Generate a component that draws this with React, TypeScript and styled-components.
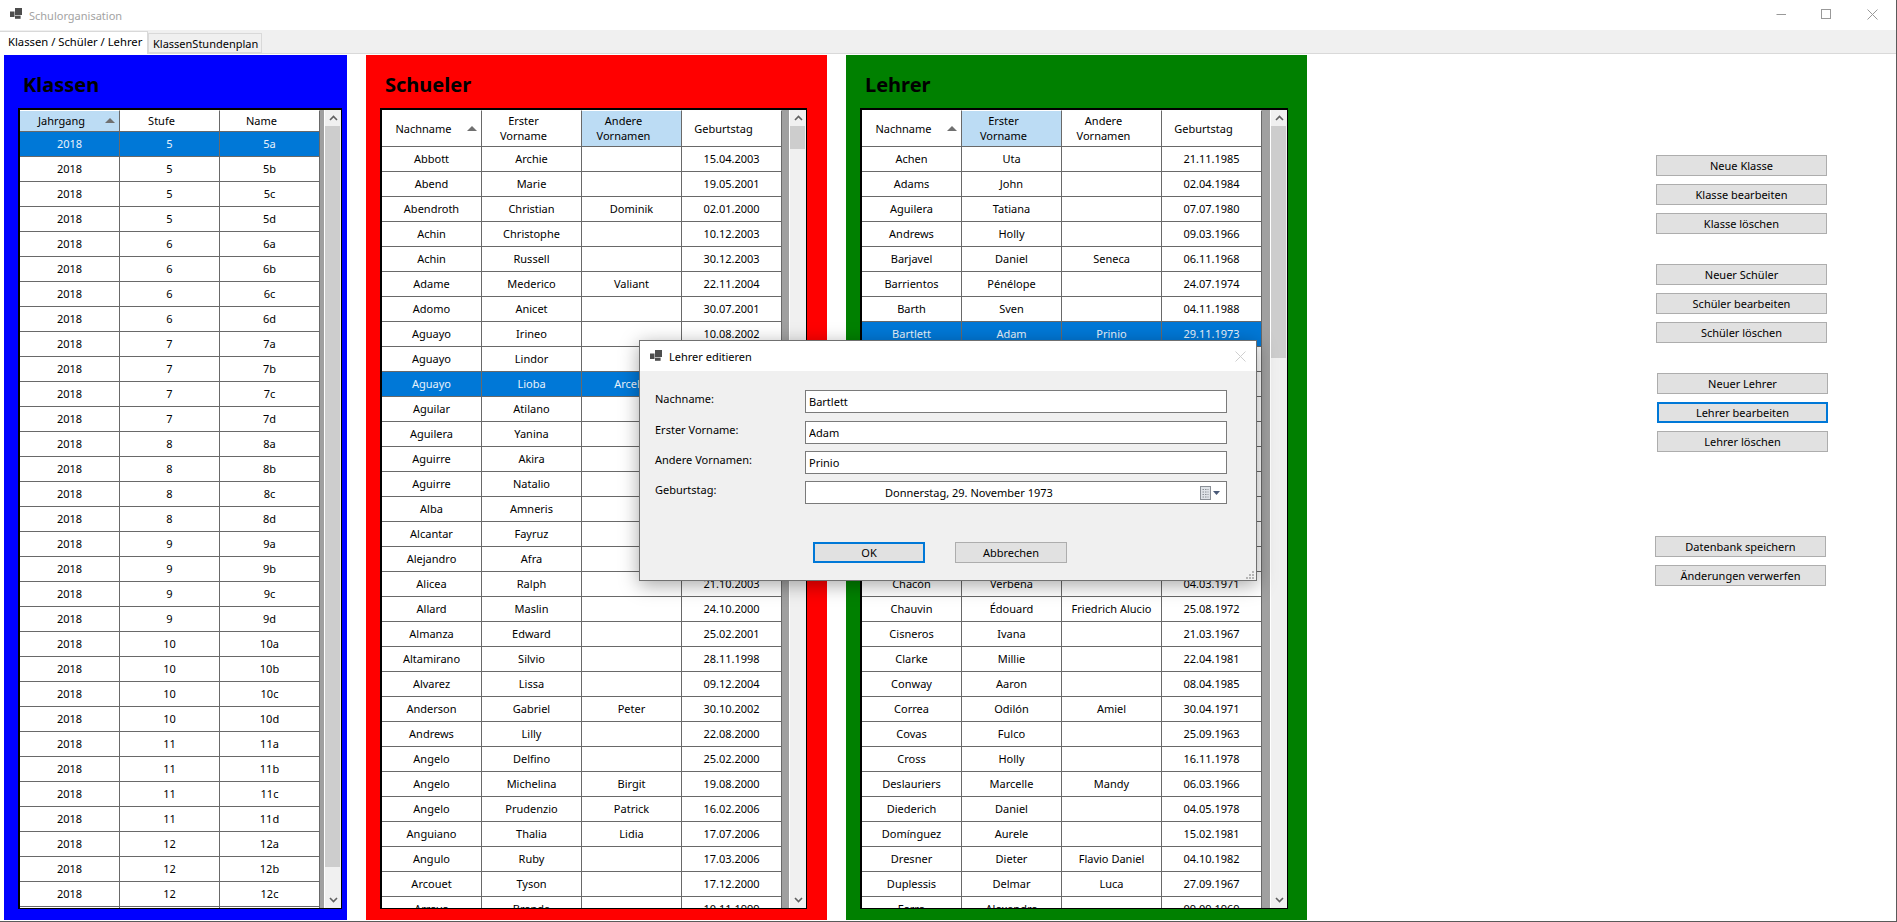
import styled, {createGlobalStyle} from "styled-components";
import * as React from "react";

type TableRow = string[];

const klassenRows: TableRow[] = [];
[5, 6, 7, 8, 9, 10, 11, 12].forEach((stufe) => {
    ["a", "b", "c", "d"].forEach((letter) => {
        klassenRows.push(["2018", String(stufe), stufe + letter]);
    });
});

const schuelerRows: TableRow[] = [
    ["Abbott", "Archie", "", "15.04.2003"],
    ["Abend", "Marie", "", "19.05.2001"],
    ["Abendroth", "Christian", "Dominik", "02.01.2000"],
    ["Achin", "Christophe", "", "10.12.2003"],
    ["Achin", "Russell", "", "30.12.2003"],
    ["Adame", "Mederico", "Valiant", "22.11.2004"],
    ["Adomo", "Anicet", "", "30.07.2001"],
    ["Aguayo", "Irineo", "", "10.08.2002"],
    ["Aguayo", "Lindor", "", ""],
    ["Aguayo", "Lioba", "Arcelia", ""],
    ["Aguilar", "Atilano", "", ""],
    ["Aguilera", "Yanina", "", ""],
    ["Aguirre", "Akira", "", ""],
    ["Aguirre", "Natalio", "", ""],
    ["Alba", "Amneris", "", ""],
    ["Alcantar", "Fayruz", "", ""],
    ["Alejandro", "Afra", "", ""],
    ["Alicea", "Ralph", "", "21.10.2003"],
    ["Allard", "Maslin", "", "24.10.2000"],
    ["Almanza", "Edward", "", "25.02.2001"],
    ["Altamirano", "Silvio", "", "28.11.1998"],
    ["Alvarez", "Lissa", "", "09.12.2004"],
    ["Anderson", "Gabriel", "Peter", "30.10.2002"],
    ["Andrews", "Lilly", "", "22.08.2000"],
    ["Angelo", "Delfino", "", "25.02.2000"],
    ["Angelo", "Michelina", "Birgit", "19.08.2000"],
    ["Angelo", "Prudenzio", "Patrick", "16.02.2006"],
    ["Anguiano", "Thalia", "Lidia", "17.07.2006"],
    ["Angulo", "Ruby", "", "17.03.2006"],
    ["Arcouet", "Tyson", "", "17.12.2000"],
    ["Arroyo", "Brenda", "", "10.11.1999"],
];

const lehrerRows: TableRow[] = [
    ["Achen", "Uta", "", "21.11.1985"],
    ["Adams", "John", "", "02.04.1984"],
    ["Aguilera", "Tatiana", "", "07.07.1980"],
    ["Andrews", "Holly", "", "09.03.1966"],
    ["Barjavel", "Daniel", "Seneca", "06.11.1968"],
    ["Barrientos", "Pénélope", "", "24.07.1974"],
    ["Barth", "Sven", "", "04.11.1988"],
    ["Bartlett", "Adam", "Prinio", "29.11.1973"],
    ["", "", "", ""],
    ["", "", "", ""],
    ["", "", "", ""],
    ["", "", "", ""],
    ["", "", "", ""],
    ["", "", "", ""],
    ["", "", "", ""],
    ["", "", "", ""],
    ["", "", "", ""],
    ["Chacón", "Verbena", "", "04.03.1971"],
    ["Chauvin", "Édouard", "Friedrich Alucio", "25.08.1972"],
    ["Cisneros", "Ivana", "", "21.03.1967"],
    ["Clarke", "Millie", "", "22.04.1981"],
    ["Conway", "Aaron", "", "08.04.1985"],
    ["Correa", "Odilón", "Amiel", "30.04.1971"],
    ["Covas", "Fulco", "", "25.09.1963"],
    ["Cross", "Holly", "", "16.11.1978"],
    ["Deslauriers", "Marcelle", "Mandy", "06.03.1966"],
    ["Diederich", "Daniel", "", "04.05.1978"],
    ["Domínguez", "Aurele", "", "15.02.1981"],
    ["Dresner", "Dieter", "Flavio Daniel", "04.10.1982"],
    ["Duplessis", "Delmar", "Luca", "27.09.1967"],
    ["Ferro", "Alexandre", "", "09.09.1969"],
];

const personColumns = ["Nachname", "Erster Vorname", "Andere Vornamen", "Geburtstag"];

const AppIcon = ({size}: {size: number}) => (
    <svg width={size} height={size} viewBox="0 0 12 12" fill="#4d4d4d">
        <rect x="5" y="0" width="7" height="7"/>
        <rect x="0" y="3.5" width="4.5" height="5.5"/>
        <rect x="5" y="7.6" width="5.6" height="3.2"/>
    </svg>
)

const Chevron = ({down}: {down?: boolean}) => (
    <svg width="9" height="6" viewBox="0 0 9 6" fill="none" stroke="#606060" strokeWidth="1.6">
        <path d={down ? "M1 1l3.5 3.5L8 1" : "M1 5l3.5-3.5L8 5"}/>
    </svg>
)

type DataTableProps = {
    columns: string[];
    rows: TableRow[];
    headerHeight: number;
    sortedColumn: number;
    hotColumn: number;
    selectedRow: number;
    thumbHeight: number;
}

const DataTable = ({columns, rows, headerHeight, sortedColumn, hotColumn, selectedRow, thumbHeight}: DataTableProps) => {
    return (
        <TableBox>
            <GridArea>
                <HeaderRow $height={headerHeight}>
                    {columns.map((title, index) => (
                        <HeaderCell key={title} $hot={index === hotColumn}>
                            {title}
                            {index === sortedColumn && <SortArrow/>}
                        </HeaderCell>
                    ))}
                </HeaderRow>
                {rows.map((row, rowIndex) => (
                    <Row key={rowIndex} $selected={rowIndex === selectedRow}>
                        {row.map((value, cellIndex) => (
                            <Cell key={cellIndex}>{value}</Cell>
                        ))}
                    </Row>
                ))}
            </GridArea>
            <GrayGap/>
            <ScrollBar>
                <ScrollButton><Chevron/></ScrollButton>
                <ScrollThumb $height={thumbHeight}/>
                <ScrollTrack/>
                <ScrollButton><Chevron down/></ScrollButton>
            </ScrollBar>
        </TableBox>
    )
}

export default function App() {
    return (
        <>
            <GlobalStyle/>
            <Window>
                <TitleBar>
                    <TitleIcon><AppIcon size={12}/></TitleIcon>
                    <WindowTitle>Schulorganisation</WindowTitle>
                    <WindowControls>
                        <svg width="11" height="11" viewBox="0 0 11 11" stroke="#999" fill="none">
                            <path d="M1.5 5.5h9.5"/>
                        </svg>
                        <svg width="11" height="11" viewBox="0 0 11 11" stroke="#999" fill="none">
                            <rect x="0.5" y="0.5" width="9" height="9"/>
                        </svg>
                        <svg width="11" height="11" viewBox="0 0 11 11" stroke="#999" fill="none">
                            <path d="M0.5 0.5l10 10M10.5 0.5l-10 10"/>
                        </svg>
                    </WindowControls>
                </TitleBar>
                <TabStrip>
                    <Tab $active>Klassen / Schüler / Lehrer</Tab>
                    <Tab>KlassenStundenplan</Tab>
                </TabStrip>
                <Content>
                    <Panel $color="#0000ff" $width={343} $paddingRight={5}>
                        <PanelTitle>Klassen</PanelTitle>
                        <DataTable columns={["Jahrgang", "Stufe", "Name"]} rows={klassenRows} headerHeight={22}
                                   sortedColumn={0} hotColumn={0} selectedRow={0} thumbHeight={741}/>
                    </Panel>
                    <Panel $color="#ff0000" $width={461} $paddingRight={20}>
                        <PanelTitle>Schueler</PanelTitle>
                        <DataTable columns={personColumns} rows={schuelerRows} headerHeight={37}
                                   sortedColumn={0} hotColumn={2} selectedRow={9} thumbHeight={23}/>
                    </Panel>
                    <Panel $color="#008000" $width={461} $paddingRight={19}>
                        <PanelTitle>Lehrer</PanelTitle>
                        <DataTable columns={personColumns} rows={lehrerRows} headerHeight={37}
                                   sortedColumn={0} hotColumn={1} selectedRow={7} thumbHeight={232}/>
                    </Panel>
                    <ButtonColumn>
                        <ButtonGroup $top={101} $indent={0}>
                            <ActionButton>Neue Klasse</ActionButton>
                            <ActionButton>Klasse bearbeiten</ActionButton>
                            <ActionButton>Klasse löschen</ActionButton>
                        </ButtonGroup>
                        <ButtonGroup $top={30} $indent={0}>
                            <ActionButton>Neuer Schüler</ActionButton>
                            <ActionButton>Schüler bearbeiten</ActionButton>
                            <ActionButton>Schüler löschen</ActionButton>
                        </ButtonGroup>
                        <ButtonGroup $top={30} $indent={1}>
                            <ActionButton>Neuer Lehrer</ActionButton>
                            <ActionButton $focused>Lehrer bearbeiten</ActionButton>
                            <ActionButton>Lehrer löschen</ActionButton>
                        </ButtonGroup>
                        <ButtonGroup $top={84} $indent={-1}>
                            <ActionButton>Datenbank speichern</ActionButton>
                            <ActionButton>Änderungen verwerfen</ActionButton>
                        </ButtonGroup>
                    </ButtonColumn>
                </Content>
                <Dialog>
                    <DialogTitleBar>
                        <AppIcon size={12}/>
                        <DialogTitle>Lehrer editieren</DialogTitle>
                        <DialogClose>
                            <svg width="11" height="11" viewBox="0 0 11 11" stroke="#cfcfcf" fill="none">
                                <path d="M0.5 0.5l10 10M10.5 0.5l-10 10"/>
                            </svg>
                        </DialogClose>
                    </DialogTitleBar>
                    <FormGrid>
                        <FormLabel>Nachname:</FormLabel>
                        <TextField defaultValue="Bartlett"/>
                        <FormLabel>Erster Vorname:</FormLabel>
                        <TextField defaultValue="Adam"/>
                        <FormLabel>Andere Vornamen:</FormLabel>
                        <TextField defaultValue="Prinio"/>
                        <FormLabel>Geburtstag:</FormLabel>
                        <DateField>
                            <span>Donnerstag, 29. November 1973</span>
                            <DateIcon>
                                <svg width="21" height="14" viewBox="0 0 21 14">
                                    <rect x="0.5" y="0.5" width="10" height="13" fill="#dfe3e8" stroke="#8a8f96"/>
                                    <path d="M2.5 3.5h6M2.5 6h6M2.5 8.5h6M2.5 11h6" stroke="#8a8f96" strokeDasharray="1.5 1"/>
                                    <path d="M13 5h7l-3.5 4z" fill="#4a5a78"/>
                                </svg>
                            </DateIcon>
                        </DateField>
                    </FormGrid>
                    <DialogButtons>
                        <DialogButton $focused>OK</DialogButton>
                        <DialogButton>Abbrechen</DialogButton>
                    </DialogButtons>
                    <ResizeGrip>
                        <svg width="8" height="8" viewBox="0 0 8 8" fill="#b5b5b5">
                            <rect x="6" y="0" width="2" height="2"/>
                            <rect x="3" y="3" width="2" height="2"/>
                            <rect x="6" y="3" width="2" height="2"/>
                            <rect x="0" y="6" width="2" height="2"/>
                            <rect x="3" y="6" width="2" height="2"/>
                            <rect x="6" y="6" width="2" height="2"/>
                        </svg>
                    </ResizeGrip>
                </Dialog>
            </Window>
        </>
    )
}

const GlobalStyle = createGlobalStyle`
    html, body {
        margin: 0;
        padding: 0;
        background: #ffffff;
        overflow: hidden;
    }
    body {
        font-family: "Noto Sans", "Open Sans", sans-serif;
        font-size: 11px;
        color: #000000;
    }
`

const Window = styled.div`
    position: relative;
    display: flex;
    flex-direction: column;
    box-sizing: border-box;
    width: 1897px;
    height: 922px;
    overflow: hidden;
    background: #ffffff;
    border-right: 1px solid #5a5a5a;
    border-bottom: 1px solid #5a5a5a;
`

const TitleBar = styled.div`
    display: flex;
    align-items: center;
    flex: none;
    height: 30px;
    padding-left: 10px;
`

const TitleIcon = styled.div`
    display: flex;
    margin-top: -3px;
`

const WindowTitle = styled.span`
    margin-left: 7px;
    color: #a3a3a3;
`

const WindowControls = styled.div`
    display: flex;
    gap: 35px;
    margin-left: auto;
    margin-right: 18px;
    margin-top: -2px;
`

const TabStrip = styled.div`
    display: flex;
    align-items: flex-end;
    flex: none;
    box-sizing: border-box;
    height: 24px;
    background: #f0f0f0;
    border-bottom: 1px solid #d9d9d9;
`

const Tab = styled.div<{$active?: boolean}>`
    box-sizing: border-box;
    width: ${(props) => (props.$active ? "148px" : "114px")};
    height: ${(props) => (props.$active ? "23px" : "20px")};
    margin-bottom: ${(props) => (props.$active ? "-1px" : "0")};
    padding-left: ${(props) => (props.$active ? "8px" : "4px")};
    line-height: ${(props) => (props.$active ? "20px" : "20px")};
    font-size: ${(props) => (props.$active ? "11.25px" : "11px")};
    white-space: nowrap;
    background: ${(props) => (props.$active ? "#ffffff" : "#f0f0f0")};
    border: 1px solid #d9d9d9;
    border-bottom: ${(props) => (props.$active ? "none" : "1px solid #d9d9d9")};
    border-left: ${(props) => (props.$active ? "none" : "1px solid #d9d9d9")};
`

const Content = styled.div`
    display: flex;
    flex: 1;
    min-height: 0;
    padding-left: 4px;
    gap: 19px;
`

const Panel = styled.section<{$color: string; $width: number; $paddingRight: number}>`
    display: flex;
    flex-direction: column;
    flex: none;
    box-sizing: border-box;
    width: ${(props) => props.$width}px;
    height: 865px;
    margin-top: 1px;
    padding: 0 ${(props) => props.$paddingRight}px 11px 14px;
    background: ${(props) => props.$color};
`

const PanelTitle = styled.h2`
    flex: none;
    height: 53px;
    margin: 0 0 0 5px;
    font-size: 20px;
    font-weight: 700;
    line-height: 60px;
    color: #000000;
`

const TableBox = styled.div`
    display: flex;
    flex: 1;
    min-height: 0;
    overflow: hidden;
    background: #a0a0a0;
    border-style: solid;
    border-color: #000000;
    border-width: 2px 1px 1px 2px;
`

const GridArea = styled.div`
    flex: none;
    overflow: hidden;
`

const HeaderRow = styled.div<{$height: number}>`
    display: flex;
    height: ${(props) => props.$height}px;
`

const HeaderCell = styled.div<{$hot: boolean}>`
    position: relative;
    display: flex;
    align-items: center;
    justify-content: center;
    box-sizing: border-box;
    width: 100px;
    padding: 0 22px 1px 6px;
    line-height: 15px;
    text-align: center;
    background: ${(props) => (props.$hot ? "#bcdcf4" : "#ffffff")};
    border-top: 1px solid #ffffff;
    border-right: 1px solid #696969;
    border-bottom: 1px solid #696969;
`

const SortArrow = styled.span`
    position: absolute;
    top: 50%;
    right: 4px;
    margin-top: -3px;
    width: 0;
    height: 0;
    border-left: 5px solid transparent;
    border-right: 5px solid transparent;
    border-bottom: 5px solid #707070;
`

const Row = styled.div<{$selected: boolean}>`
    display: flex;
    height: 25px;
    background: ${(props) => (props.$selected ? "#0078d7" : "#ffffff")};
    color: ${(props) => (props.$selected ? "#e8f2fb" : "#000000")};
`

const Cell = styled.div`
    box-sizing: border-box;
    width: 100px;
    line-height: 24px;
    text-align: center;
    white-space: nowrap;
    border-right: 1px solid #696969;
    border-bottom: 1px solid #696969;
`

const GrayGap = styled.div`
    flex: 1;
    background: #a0a0a0;
`

const ScrollBar = styled.div`
    display: flex;
    flex-direction: column;
    flex: none;
    width: 17px;
    background: #f0f0f0;
    border-left: 1px solid #ffffff;
    box-sizing: border-box;
`

const ScrollButton = styled.div`
    display: flex;
    align-items: center;
    justify-content: center;
    flex: none;
    height: 16px;
`

const ScrollThumb = styled.div<{$height: number}>`
    flex: none;
    height: ${(props) => props.$height}px;
    margin-right: 1px;
    background: #cdcdcd;
`

const ScrollTrack = styled.div`
    flex: 1;
`

const ButtonColumn = styled.aside`
    display: flex;
    flex-direction: column;
    flex: none;
    margin-left: 330px;
`

const ButtonGroup = styled.div<{$top: number; $indent: number}>`
    display: flex;
    flex-direction: column;
    gap: 8px;
    margin-top: ${(props) => props.$top}px;
    margin-left: ${(props) => props.$indent}px;
`

const ActionButton = styled.button<{$focused?: boolean}>`
    box-sizing: border-box;
    width: 171px;
    height: 21px;
    padding: 0;
    font-family: inherit;
    font-size: 11px;
    color: #000000;
    background: #e1e1e1;
    border: ${(props) => (props.$focused ? "2px solid #0078d7" : "1px solid #adadad")};
`

const Dialog = styled.div`
    position: absolute;
    left: 639px;
    top: 340px;
    display: flex;
    flex-direction: column;
    box-sizing: border-box;
    width: 618px;
    height: 241px;
    background: #f0f0f0;
    border: 1px solid #707070;
    box-shadow: 0 4px 18px rgba(0, 0, 0, 0.35);
`

const DialogTitleBar = styled.div`
    display: flex;
    align-items: center;
    flex: none;
    height: 30px;
    padding-left: 10px;
    background: #ffffff;
`

const DialogTitle = styled.span`
    margin-left: 7px;
`

const DialogClose = styled.div`
    display: flex;
    margin-left: auto;
    margin-right: 10px;
`

const FormGrid = styled.div`
    display: grid;
    grid-template-columns: 150px 422px;
    grid-template-rows: 24px 23px 23px 23px;
    row-gap: 7px;
    padding: 19px 0 0 15px;
`

const FormLabel = styled.label`
    line-height: 17px;
`

const TextField = styled.input`
    box-sizing: border-box;
    width: 100%;
    height: 23px;
    padding: 0 3px;
    font-family: inherit;
    font-size: 11px;
    color: #000000;
    background: #ffffff;
    border: 1px solid #7a7a7a;
    outline: none;
`

const DateField = styled.div`
    display: flex;
    align-items: center;
    box-sizing: border-box;
    height: 23px;
    padding: 0 5px 0 79px;
    background: #ffffff;
    border: 1px solid #7a7a7a;
`

const DateIcon = styled.div`
    display: flex;
    margin-left: auto;
`

const DialogButtons = styled.div`
    display: flex;
    gap: 30px;
    margin-top: 38px;
    padding-left: 173px;
`

const DialogButton = styled.button<{$focused?: boolean}>`
    box-sizing: border-box;
    width: 112px;
    height: 21px;
    padding: 0;
    font-family: inherit;
    font-size: 11px;
    color: #000000;
    background: #e1e1e1;
    border: ${(props) => (props.$focused ? "2px solid #0078d7" : "1px solid #adadad")};
`

const ResizeGrip = styled.div`
    position: absolute;
    right: 2px;
    bottom: 1px;
    display: flex;
`
